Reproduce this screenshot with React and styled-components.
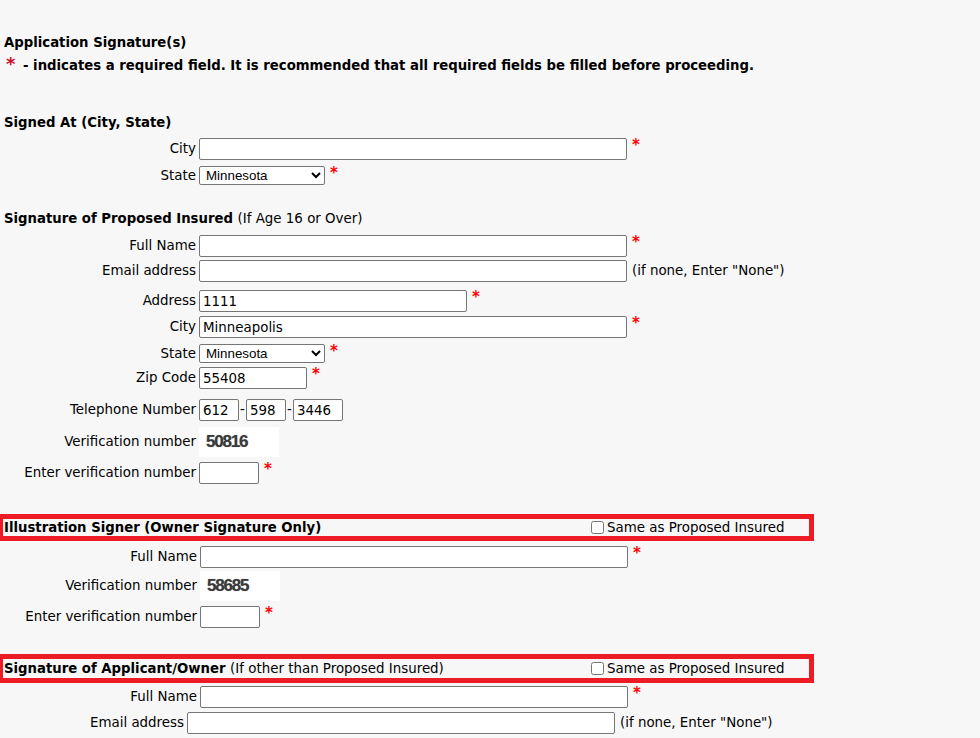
import React from "react";
import styled, { createGlobalStyle } from "styled-components";

const GlobalStyle = createGlobalStyle`
  html, body { margin: 0; padding: 0; background: #f7f7f7; overflow: hidden; }
  body { font-family: "DejaVu Sans", Verdana, sans-serif; font-size: 13.4px; color: #000; }
  * { box-sizing: border-box; }
`;

const Page = styled.div`
  display: flex;
  flex-direction: column;
  align-items: flex-start;
  width: 980px;
  height: 738px;
  overflow: hidden;
  padding-top: 35px;
`;

const Title = styled.div`
  font-weight: bold;
  font-size: 13.25px;
  line-height: 16px;
  height: 16px;
  padding-left: 4px;
  white-space: nowrap;
  margin-top: ${(p) => p.$mt || 0}px;
`;

const Note = styled.div`
  display: flex;
  align-items: baseline;
  height: 16px;
  font-weight: bold;
  font-size: 13.25px;
  line-height: 16px;
  padding-left: 4px;
  white-space: nowrap;
  margin-top: ${(p) => p.$mt || 0}px;
`;

const NoteStar = styled.span`
  width: 19px;
  padding-left: 2px;
  font-size: 18px;
  line-height: 16px;
  font-weight: bold;
  color: #c8102e;
`;

const Plain = styled.span`
  font-weight: normal;
  font-size: 13.4px;
`;

const Row = styled.div`
  display: flex;
  align-items: center;
  margin-top: ${(p) => p.$mt || 0}px;
`;

const Label = styled.div`
  width: ${(p) => p.$w}px;
  flex-shrink: 0;
  text-align: right;
  line-height: 16px;
  white-space: nowrap;
`;

const Field = styled.div`
  display: flex;
  align-items: ${(p) => (p.$center ? "center" : "flex-start")};
  margin-left: 3px;
`;

const TextInput = styled.input`
  width: ${(p) => p.$w}px;
  height: 22px;
  margin: 0;
  padding: 0 3px;
  border: 1px solid #767676;
  border-radius: 2px;
  background: #fff;
  font-family: "DejaVu Sans", Verdana, sans-serif;
  font-size: 13.4px;
  color: #000;
  outline: none;
`;

const Select = styled.select`
  width: ${(p) => p.$w}px;
  height: 19px;
  margin: 0;
  padding: 0 0 0 2px;
  border: 1px solid #767676;
  border-radius: 2px;
  background: #fff;
  font-family: "Liberation Sans", Arial, sans-serif;
  font-size: 13.33px;
  color: #000;
`;

const Req = styled.span`
  margin-left: 5px;
  font-size: 15px;
  font-weight: bold;
  line-height: 1;
  color: #f00;
`;

const Hint = styled.span`
  margin-left: 5px;
  line-height: 22px;
  white-space: nowrap;
`;

const Dash = styled.span`
  width: 7px;
  text-align: center;
  line-height: 16px;
`;

const VerifyBox = styled.div`
  width: 80px;
  height: 30px;
  display: flex;
  align-items: center;
  padding-left: 7px;
  background: #fff;
  font-family: "Liberation Sans", Arial, sans-serif;
  font-size: 17px;
  font-weight: bold;
  letter-spacing: -1.2px;
  color: #3a3a3a;
  text-shadow: 0 0 1px rgba(0, 0, 0, 0.45);
`;

const RedBox = styled.div`
  margin-top: ${(p) => p.$mt || 0}px;
  width: 814px;
  height: ${(p) => p.$h}px;
  border: 5px solid #ed1c24;
  border-left-width: 3px;
  padding-left: 1px;
  display: grid;
  grid-template-columns: 587px auto;
  align-items: center;
`;

const BoxTitle = styled.div`
  font-weight: bold;
  font-size: 13.25px;
  line-height: 16px;
  white-space: nowrap;
`;

const Same = styled.label`
  display: flex;
  align-items: center;
  gap: 3px;
  line-height: 16px;
  white-space: nowrap;
`;

const Check = styled.input`
  width: 13px;
  height: 13px;
  margin: 0;
`;

function TextRow({ mt, lw, label, w, value, req, hint }) {
  return (
    <Row $mt={mt}>
      <Label $w={lw}>{label}</Label>
      <Field>
        <TextInput $w={w} defaultValue={value || ""} />
        {req && <Req>*</Req>}
        {hint && <Hint>{hint}</Hint>}
      </Field>
    </Row>
  );
}

function StateRow({ mt, lw }) {
  return (
    <Row $mt={mt}>
      <Label $w={lw}>State</Label>
      <Field>
        <Select $w={126} defaultValue="MN">
          <option value="MN">Minnesota</option>
        </Select>
        <Req>*</Req>
      </Field>
    </Row>
  );
}

function VerifyRows({ lw, code, mt1, mt2 }) {
  return (
    <>
      <Row $mt={mt1}>
        <Label $w={lw}>Verification number</Label>
        <Field>
          <VerifyBox>{code}</VerifyBox>
        </Field>
      </Row>
      <TextRow mt={mt2} lw={lw} label="Enter verification number" w={60} req />
    </>
  );
}

const NONE_HINT = '(if none, Enter "None")';

export default function App() {
  return (
    <>
      <GlobalStyle />
      <Page>
        <Title>Application Signature(s)</Title>
        <Note $mt={5}>
          <NoteStar>*</NoteStar>- indicates a required field. It is recommended that all required fields be filled before proceeding.
        </Note>

        <Title $mt={43}>Signed At (City, State)</Title>
        <TextRow mt={7} lw={196} label="City" w={428} req />
        <StateRow mt={6} lw={196} />

        <Title $mt={26}>
          Signature of Proposed Insured <Plain>(If Age 16 or Over)</Plain>
        </Title>
        <TextRow mt={8} lw={196} label="Full Name" w={428} req />
        <TextRow mt={3} lw={196} label="Email address" w={428} hint={NONE_HINT} />
        <TextRow mt={8} lw={196} label="Address" w={268} value="1111" req />
        <TextRow mt={4} lw={196} label="City" w={428} value="Minneapolis" req />
        <StateRow mt={6} lw={196} />
        <TextRow mt={4} lw={196} label="Zip Code" w={108} value="55408" req />
        <Row $mt={10}>
          <Label $w={196}>Telephone Number</Label>
          <Field $center>
            <TextInput $w={40} defaultValue="612" />
            <Dash>-</Dash>
            <TextInput $w={40} defaultValue="598" />
            <Dash>-</Dash>
            <TextInput $w={50} defaultValue="3446" />
          </Field>
        </Row>
        <VerifyRows lw={196} code="50816" mt1={6} mt2={5} />

        <RedBox $mt={30} $h={27}>
          <BoxTitle>Illustration Signer (Owner Signature Only)</BoxTitle>
          <Same>
            <Check type="checkbox" />
            Same as Proposed Insured
          </Same>
        </RedBox>
        <TextRow mt={5} lw={197} label="Full Name" w={428} req />
        <VerifyRows lw={197} code="58685" mt1={3} mt2={5} />

        <RedBox $mt={26} $h={29}>
          <BoxTitle>
            Signature of Applicant/Owner <Plain>(If other than Proposed Insured)</Plain>
          </BoxTitle>
          <Same>
            <Check type="checkbox" />
            Same as Proposed Insured
          </Same>
        </RedBox>
        <TextRow mt={3} lw={197} label="Full Name" w={428} req />
        <TextRow mt={4} lw={184} label="Email address" w={428} hint={NONE_HINT} />
      </Page>
    </>
  );
}
